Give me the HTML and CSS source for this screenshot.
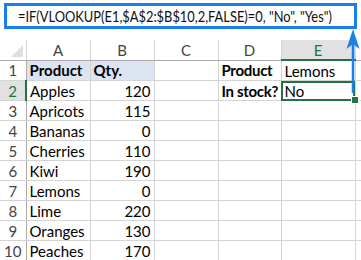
FILE: index.html
```html
<!DOCTYPE html>
<html lang="en">
<head>
    <meta charset="UTF-8">
    <title>VLOOKUP check</title>
    <link rel="stylesheet" href="styles.css">
</head>
<body>
    <div class="formula-bar">
        <div class="formula"><span class="formula-text">=IF(VLOOKUP(E1,$A$2:$B$10,2,FALSE)=0, "No", "Yes")</span></div>
    </div>
    <div class="sheet">
        <table class="grid">
            <colgroup>
                <col class="c-row">
                <col class="c-a">
                <col class="c-b">
                <col class="c-c">
                <col class="c-d">
                <col class="c-e">
                <col class="c-f">
            </colgroup>
            <tr class="col-heads">
                <th class="corner"><span class="tri"></span></th>
                <th>A</th>
                <th>B</th>
                <th>C</th>
                <th>D</th>
                <th class="active">E</th>
                <th></th>
            </tr>
            <tr>
                <th class="rn">1</th>
                <td class="hd">Product</td>
                <td class="hd">Qty.</td>
                <td></td>
                <td class="bold lbl-top">Product</td>
                <td>Lemons</td>
                <td></td>
            </tr>
            <tr>
                <th class="rn active">2</th>
                <td>Apples</td>
                <td class="num">120</td>
                <td></td>
                <td class="bold lbl-bot">In stock?</td>
                <td class="selected">No<span class="handle"></span></td>
                <td></td>
            </tr>
            <tr><th class="rn">3</th><td>Apricots</td><td class="num">115</td><td></td><td></td><td></td><td></td></tr>
            <tr><th class="rn">4</th><td>Bananas</td><td class="num">0</td><td></td><td></td><td></td><td></td></tr>
            <tr><th class="rn">5</th><td>Cherries</td><td class="num">110</td><td></td><td></td><td></td><td></td></tr>
            <tr><th class="rn">6</th><td>Kiwi</td><td class="num">190</td><td></td><td></td><td></td><td></td></tr>
            <tr><th class="rn">7</th><td>Lemons</td><td class="num">0</td><td></td><td></td><td></td><td></td></tr>
            <tr><th class="rn">8</th><td>Lime</td><td class="num">220</td><td></td><td></td><td></td><td></td></tr>
            <tr><th class="rn">9</th><td>Oranges</td><td class="num">130</td><td></td><td></td><td></td><td></td></tr>
            <tr><th class="rn">10</th><td>Peaches</td><td class="num">170</td><td></td><td></td><td></td><td></td></tr>
        </table>
    </div>
    <svg class="arrow" width="16" height="66" viewBox="0 0 16 66">
        <line x1="8" y1="10" x2="8" y2="64" stroke="#1a7fe6" stroke-width="2.5"/>
        <path d="M8 0 L14.5 20 L8 15 L1.5 20 Z" fill="#1a7fe6"/>
    </svg>
</body>
</html>
```

FILE: styles.css
```css
body {
    margin: 0;
    background: #fff;
    font-family: Lato, "Liberation Sans", sans-serif;
    color: #000;
    width: 361px;
    height: 260px;
    overflow: hidden;
    position: relative;
}
.formula-bar {
    height: 40px;
    padding: 3px 4px 0 4px;
    box-sizing: border-box;
}
.formula {
    border: 3px solid #1a7fe6;
    height: 26px;
    box-sizing: border-box;
    padding-left: 11px;
    white-space: nowrap;
    overflow: hidden;
}
.formula-text {
    display: inline-block;
    font-size: 15.5px;
    line-height: 19px;
    color: #111;
    transform: scaleX(0.83);
    transform-origin: left center;
}
.sheet {
    overflow: hidden;
}
.grid {
    border-collapse: collapse;
    table-layout: fixed;
    width: 361px;
    font-size: 15px;
}
.c-row { width: 26px; }
.c-a { width: 64px; }
.c-b { width: 64px; }
.c-c { width: 64px; }
.c-d { width: 63px; }
.c-e { width: 74px; }
.c-f { width: 6px; }
.grid td, .grid th {
    height: 19px;
    padding: 0 3px;
    border: 1px solid #d4d4d4;
    white-space: nowrap;
    overflow: visible;
    line-height: 18px;
}
.grid tr:first-child th { border-top: none; }
.grid th:first-child { border-left: none; }
.col-heads th {
    font-weight: normal;
    color: #444;
    text-align: center;
    border-bottom: 1px solid #ababab;
    background: #fff;
}
.col-heads th.active {
    background: #e1e1e1;
    color: #217346;
    border-bottom: 2px solid #217346;
}
.corner {
    position: relative;
}
.tri {
    position: absolute;
    right: 3px;
    bottom: 3px;
    width: 0;
    height: 0;
    border-left: 12px solid transparent;
    border-bottom: 12px solid #dfdfdf;
}
.rn {
    font-weight: normal;
    color: #444;
    text-align: center;
    padding: 0;
    border-right: 1px solid #ababab !important;
}
.rn.active {
    background: #e1e1e1;
    color: #217346;
    border-right: 2px solid #217346 !important;
}
.hd {
    background: #dce3f1;
    font-weight: bold;
}
.bold {
    font-weight: bold;
    letter-spacing: -0.3px;
}
.num { text-align: right; }
.lbl-top { border-left: 1px solid #595959; }
.lbl-bot {
    border-left: 1px solid #595959;
    border-bottom: 1px solid #595959;
}
.selected {
    position: relative;
    outline: 2px solid #217346;
    outline-offset: -2px;
}
.handle {
    position: absolute;
    right: -4px;
    bottom: -4px;
    width: 6px;
    height: 6px;
    background: #217346;
    border: 1px solid #fff;
}
.arrow {
    position: absolute;
    left: 345px;
    top: 29px;
}
```
